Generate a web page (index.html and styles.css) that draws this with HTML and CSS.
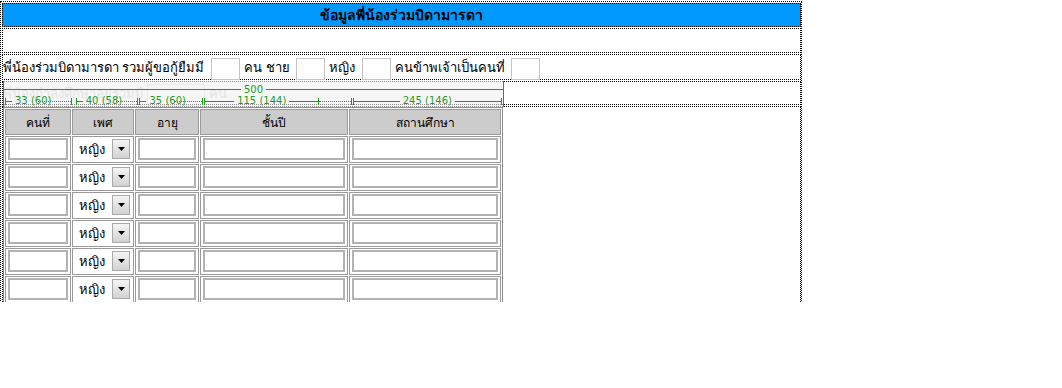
FILE: index.html
```html
<!DOCTYPE html>
<html>
<head>
    <meta charset="utf-8">
    <title>ข้อมูลพี่น้องร่วมบิดามารดา</title>
    <link rel="stylesheet" href="styles.css">
</head>
<body>
    <div class="canvas">
        <div class="frame">
            <div class="cell head">ข้อมูลพี่น้องร่วมบิดามารดา</div>
            <div class="cell blank"></div>
            <div class="cell line">พี่น้องร่วมบิดามารดา รวมผู้ขอกู้ยืมมี <input class="tiny" type="text"> คน ชาย <input class="tiny" type="text"> หญิง <input class="tiny" type="text"> คนข้าพเจ้าเป็นคนที่ <input class="tiny" type="text"></div>
            <div class="cell ruler-row">
                <div class="faded">พี่น้องกำลังศึกษาอยู่รวมมี <span class="faded-box"></span> คน</div>
                <div class="ruler">
                    <div class="ruler-top">
                        <span class="rline"></span>
                        <span class="rlabel">500</span>
                        <span class="rline"></span>
                    </div>
                    <div class="ruler-cols">
                        <div class="seg c1"><div class="solid" style="width:33px"><i class="tick"></i><span class="rline short"></span><span class="rlabel">33 (60)</span></div><span class="dots"></span><i class="tick"></i></div>
                        <div class="seg c2"><div class="solid" style="width:40px"><i class="tick"></i><span class="rline short"></span><span class="rlabel">40 (58)</span></div><span class="dots"></span><i class="tick"></i></div>
                        <div class="seg c3"><div class="solid" style="width:35px"><i class="tick"></i><span class="rline short"></span><span class="rlabel">35 (60)</span></div><span class="dots"></span><i class="tick"></i></div>
                        <div class="seg c4"><div class="solid" style="width:115px"><i class="tick"></i><span class="rline"></span><span class="rlabel">115 (144)</span><span class="rline"></span><i class="tick"></i></div><span class="dots"></span><i class="tick"></i></div>
                        <div class="seg c5"><div class="solid full"><i class="tick"></i><span class="rline"></span><span class="rlabel">245 (146)</span><span class="rline"></span><i class="tick"></i></div></div>
                    </div>
                </div>
            </div>
            <div class="cell table-cell">
                <table class="siblings">
                    <thead>
                        <tr>
                            <th class="c1">คนที่</th>
                            <th class="c2">เพศ</th>
                            <th class="c3">อายุ</th>
                            <th class="c4">ชั้นปี</th>
                            <th class="c5">สถานศึกษา</th>
                        </tr>
                    </thead>
                    <tbody id="rows"></tbody>
                </table>
            </div>
        </div>
    </div>

    <script>
        const rows = document.getElementById('rows');
        for (let i = 0; i < 6; i++) {
            const tr = document.createElement('tr');
            tr.innerHTML =
                '<td><input type="text"></td>' +
                '<td><div class="pick"><select><option>หญิง</option><option>ชาย</option></select>' +
                '<span class="arrow"><svg width="7" height="4" viewBox="0 0 7 4"><path d="M0 0h7L3.5 4z" fill="#000"/></svg></span></div></td>' +
                '<td><input type="text"></td>' +
                '<td><input type="text"></td>' +
                '<td><input type="text"></td>';
            rows.appendChild(tr);
        }
    </script>
</body>
</html>
```

FILE: styles.css
```css
* {
    box-sizing: border-box;
}

body {
    margin: 0;
    background: #fff;
    font-family: Tahoma, "Noto Sans", "DejaVu Sans", sans-serif;
    font-size: 13px;
    color: #000;
}

.canvas {
    height: 302px;
    overflow: hidden;
}

.frame {
    width: 802px;
    margin-top: 1px;
    border: 1px dotted #000;
    padding: 1px 0 0 1px;
    display: flex;
    flex-direction: column;
    gap: 1px;
}

.cell {
    border: 1px dotted #000;
}

.head {
    height: 24px;
    background: #0099ff;
    font-weight: bold;
    text-align: center;
    line-height: 21px;
    font-size: 14px;
}

.blank {
    height: 25px;
}

.line {
    height: 26px;
    line-height: 24px;
    white-space: nowrap;
}

.tiny {
    width: 29px;
    height: 22px;
    margin: 0 1px 0 3px;
    border: 1px solid #c4c4c4;
    padding: 0;
    vertical-align: middle;
}

.ruler-row {
    height: 24px;
    position: relative;
}

.faded {
    color: #d0d0d0;
    line-height: 23px;
    white-space: nowrap;
}

.faded-box {
    display: inline-block;
    width: 58px;
    height: 22px;
    border: 1px solid #e4e4e4;
    vertical-align: middle;
}

/* table width overlay */
.ruler {
    position: absolute;
    left: 0;
    top: -1px;
    width: 501px;
    height: 26px;
    background: rgba(240, 240, 240, 0.6);
    border-left: 1px solid #1f9a1f;
    border-right: 1px solid #1f9a1f;
    color: #1f9a1f;
    font-size: 10px;
    line-height: 12px;
    font-family: "DejaVu Sans", sans-serif;
}

.ruler-top {
    display: flex;
    align-items: center;
    height: 15px;
    padding-top: 2px;
}

.rline {
    flex: 1;
    height: 1px;
    background: #1f9a1f;
}

.rline.short {
    flex: none;
    width: 6px;
}

.rlabel {
    padding: 0 3px;
    white-space: nowrap;
}

.ruler-cols {
    display: flex;
    padding-left: 1px;
    height: 10px;
    align-items: center;
}

.seg {
    display: flex;
    align-items: center;
    margin-right: 1px;
}

.seg.c1 { width: 67px; }
.seg.c2 { width: 63px; margin-left: 3px; }
.seg.c3 { width: 64px; }
.seg.c4 { width: 148px; }
.seg.c5 { width: 150px; }

.solid {
    display: flex;
    align-items: center;
    flex: none;
}

.solid.full {
    flex: 1;
}

.tick {
    display: block;
    width: 1px;
    height: 7px;
    background: #1f9a1f;
    flex: none;
}

.dots {
    flex: 1;
    min-width: 4px;
    border-bottom: 1px dotted #1f9a1f;
    height: 1px;
}

.table-cell {
    height: 220px;
    padding: 0;
}

.siblings {
    width: 500px;
    table-layout: fixed;
    border-collapse: separate;
    border-spacing: 1px;
    border: 1px solid #8a8a8a;
}

.siblings th,
.siblings td {
    border: 1px solid #9a9a9a;
}

.siblings th {
    background: #cccccc;
    font-weight: normal;
    font-size: 12px;
    height: 26px;
    padding: 0;
}

.siblings td {
    height: 27px;
    padding: 1px 2px 2px;
}

.c1 { width: 66px; }
.c2 { width: 62px; }
.c3 { width: 64px; }
.c4 { width: 148px; }
.c5 { width: 152px; }

.siblings input {
    display: block;
    width: 100%;
    height: 22px;
    border: 2px solid #b2b2b2;
    padding: 0;
}

.pick {
    display: flex;
    align-items: center;
    height: 22px;
    background: #fff;
}

.pick select {
    appearance: none;
    -webkit-appearance: none;
    border: none;
    background: transparent;
    flex: 1;
    min-width: 0;
    height: 22px;
    padding: 0 0 0 4px;
    font-family: inherit;
    font-size: 13px;
    color: #000;
}

.arrow {
    width: 18px;
    height: 20px;
    margin-right: 1px;
    border: 1px solid #a9a9a9;
    background: linear-gradient(#f4f4f4, #d2d2d2);
    display: flex;
    align-items: center;
    justify-content: center;
}
```
